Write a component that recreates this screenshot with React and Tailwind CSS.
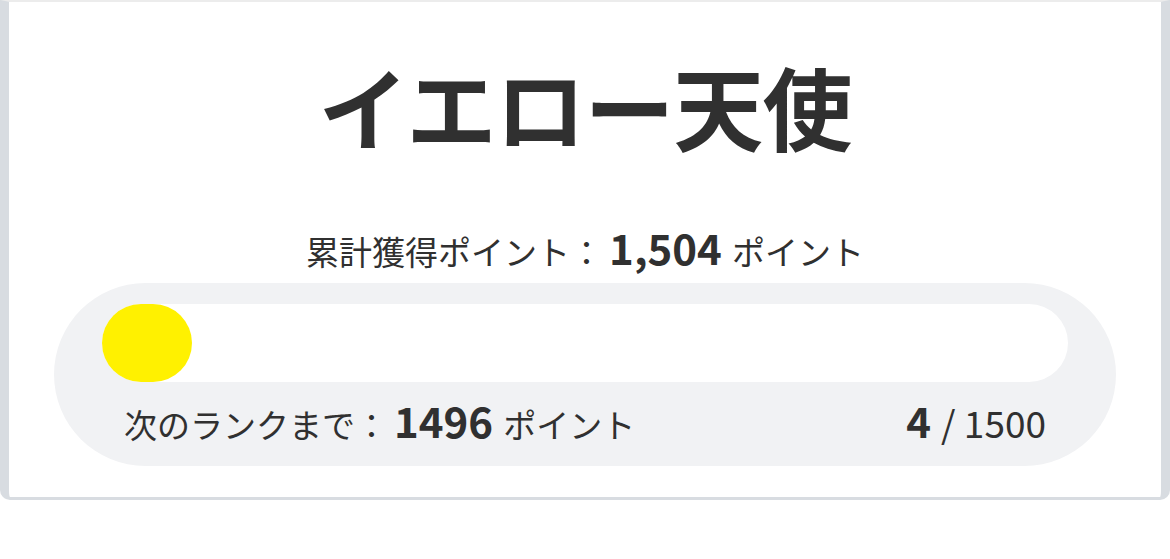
export default function App() {
  const font = { fontFamily: '"Noto Sans CJK JP", "Noto Sans", sans-serif' };
  return (
    <div className="w-[1170px] h-[559px] bg-white text-[#303030]" style={font}>
      <div className="h-[500px] border-l-[9px] border-r-[9px] border-b-[3px] border-t-[2px] border-[#d8dce1] border-t-[#ececec] rounded-b-[10px] flex flex-col items-center">
        <h1 className="mt-[58px] text-[90px] font-bold leading-none tracking-[-1px]">イエロー天使</h1>
        <div className="mt-[76px] flex items-baseline leading-none">
          <span className="text-[33px]">累計獲得ポイント：</span>
          <span className="ml-[6px] text-[42px] font-bold">1,504</span>
          <span className="ml-[10px] text-[33px]">ポイント</span>
        </div>
        <div className="mt-[15px] w-[1062px] h-[183px] rounded-full bg-[#f1f2f4] px-[48px] pt-[21px]">
          <div className="h-[78px] rounded-full bg-white">
            <div className="h-[78px] w-[90px] rounded-full bg-[#fff100]" />
          </div>
          <div className="flex items-baseline justify-between px-[22px] pt-[17px] leading-none">
            <div className="flex items-baseline">
              <span className="text-[33px]">次のランクまで：</span>
              <span className="ml-[6px] text-[42px] font-bold">1496</span>
              <span className="ml-[10px] text-[33px]">ポイント</span>
            </div>
            <div className="flex items-baseline">
              <span className="text-[42px] font-bold">4</span>
              <span className="ml-[10px] text-[37px]">/ 1500</span>
            </div>
          </div>
        </div>
      </div>
    </div>
  );
}
